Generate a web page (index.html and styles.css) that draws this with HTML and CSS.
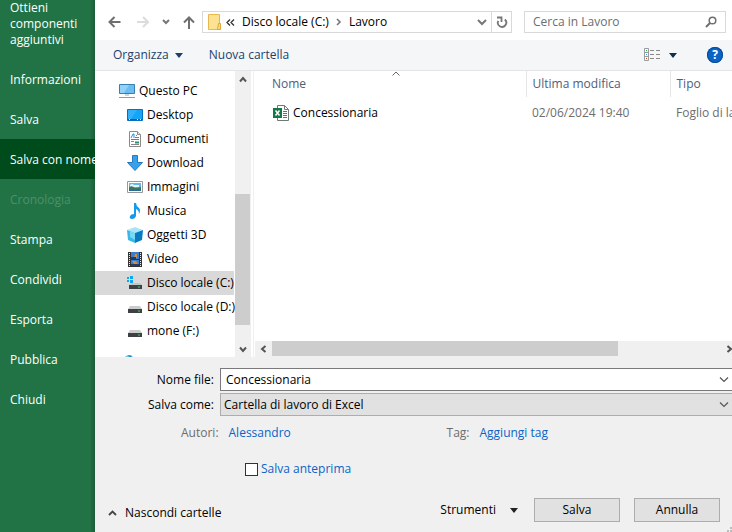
FILE: index.html
```html
<!DOCTYPE html>
<html lang="it">
<head>
<meta charset="utf-8">
<meta name="viewport" content="width=device-width, initial-scale=1">
<title>Salva con nome</title>
<link rel="stylesheet" href="styles.css">
</head>
<body>
<nav class="backstage">
  <a class="tab tall" href="#">Ottieni componenti aggiuntivi</a>
  <a class="tab" href="#">Informazioni</a>
  <a class="tab" href="#">Salva</a>
  <a class="tab active" href="#">Salva con nome</a>
  <a class="tab disabled" aria-disabled="true">Cronologia</a>
  <a class="tab" href="#">Stampa</a>
  <a class="tab" href="#">Condividi</a>
  <a class="tab" href="#">Esporta</a>
  <a class="tab" href="#">Pubblica</a>
  <a class="tab" href="#">Chiudi</a>
</nav>
<main class="dialog">
  <header class="address-row">
    <div class="history">
      <button class="plain" aria-label="Indietro"><svg width="14" height="12" viewBox="0 0 14 12" fill="none" stroke="#6f6f6f" stroke-width="2"><path d="M1.500 6H12.500M6.500 1L1.500 6l5 5"/></svg></button>
      <button class="plain" aria-label="Avanti"><svg width="14" height="12" viewBox="0 0 14 12" fill="none" stroke="#dcdcdc" stroke-width="2"><path d="M2 6h11M8 1l5 5-5 5"/></svg></button>
      <button class="plain" aria-label="Percorsi recenti"><svg width="8" height="6" viewBox="0 0 8 6" fill="none" stroke="#777" stroke-width="2"><path d="M1 1l3 3 3-3"/></svg></button>
      <button class="plain" aria-label="Su"><svg width="12" height="13" viewBox="0 0 12 13" fill="none" stroke="#6f6f6f" stroke-width="2"><path d="M6 13V1.500M1 6.500l5-5 5 5"/></svg></button>
    </div>
    <div class="address">
      <svg class="folder" width="16" height="18" viewBox="0 0 16 18"><path d="M1.500 1.500h11v15h-11z" fill="#fde391" stroke="#e8b74f"/><path d="M11.500 10.500h2v6h-3z" fill="#fbdc80" stroke="#dfa63c"/></svg>
      <svg width="9" height="7" viewBox="0 0 9 7" fill="none" stroke="#333" stroke-width="1.300"><path d="M4 .5l-3 3 3 3M8 .5l-3 3 3 3"/></svg>
      <a class="crumb" href="#">Disco locale (C:)</a>
      <svg width="6" height="8" viewBox="0 0 6 8" fill="none" stroke="#777" stroke-width="1.600"><path d="M1 1l3 3-3 3"/></svg>
      <a class="crumb" href="#">Lavoro</a>
      <button class="plain push" aria-label="Posizioni precedenti"><svg width="10" height="7" viewBox="0 0 10 7" fill="none" stroke="#777" stroke-width="2"><path d="M1 1l4 4 4-4"/></svg></button>
      <button class="plain refresh" aria-label="Aggiorna"><svg width="12" height="12" viewBox="0 0 12 12" fill="none" stroke="#777" stroke-width="1.800"><path d="M1 1.500h4.500V6"/><path d="M2.300 4.800a4.200 4.200 0 1 0 6.500-1.300"/></svg></button>
    </div>
    <div class="search">
      <input type="search" aria-label="Cerca" placeholder="Cerca in Lavoro">
      <svg width="12" height="12" viewBox="0 0 12 12" fill="none" stroke="#6f6f6f"><circle cx="7.500" cy="4.500" r="3.300" stroke-width="1.500"/><path d="M5 7L1 11" stroke-width="2"/></svg>
    </div>
  </header>
  <div class="toolbar">
    <button class="plain command">Organizza <svg width="8" height="5" viewBox="0 0 8 5"><path d="M0 0h8L4 5z" fill="#1c3f6e"/></svg></button>
    <button class="plain command">Nuova cartella</button>
    <button class="plain view" aria-label="Cambia visualizzazione"><svg width="17" height="14" viewBox="0 0 17 14"><path d="M.5.500h4v12h-4zM.5 4.500h4M.5 8.500h4" fill="#fff" stroke="#9b9b9b"/><path d="M6 2.500h4M12 2.500h4M6 6.500h4M12 6.500h4M6 10.500h4M12 10.500h4" stroke="#8a8a8a"/><path d="M2 2h1v1H2z" fill="#239b56"/><path d="M2 6h1v1H2z" fill="#1e9be8"/><path d="M2 10h1v1H2z" fill="#b3402a"/></svg><svg width="8" height="5" viewBox="0 0 8 5"><path d="M0 0h8L4 5z" fill="#122d50"/></svg></button>
    <button class="plain help" aria-label="Guida">?</button>
  </div>
  <div class="browser">
    <ul class="tree">
      <li class="root"><svg width="16" height="16" viewBox="0 0 16 16"><path d="M.5 1.500h15v9H.5z" fill="#69bdf3" stroke="#397fae"/><path d="M1 2h9l-5 8H1z" fill="#93d2f8"/><path d="M6 11h4v2H6z" fill="#ccd5da"/><path d="M0 14.500h16" stroke="#93999c"/></svg>Questo PC</li>
      <li><svg width="16" height="16" viewBox="0 0 16 16"><path d="M.5 2.500h15v11H.5z" fill="#12a5f8" stroke="#096ebf"/><path d="M1 3h9L4 12H1z" fill="#32b0fa"/><path d="M1 12.500h14" stroke="#075ca6"/><path d="M2 12.500h1M10 12.500h1M13 12.500h1" stroke="#fff"/></svg>Desktop</li>
      <li><svg width="16" height="16" viewBox="0 0 16 16"><path d="M2.500.500h8l3 3v12h-11z" fill="#fff" stroke="#8b8b8b"/><path d="M10.500.500v3h3" fill="#ddd" stroke="#8b8b8b"/><path d="M4 7l2-4h1v4M9 4.500h1M8 6.500h4M4 8.500h8" fill="none" stroke="#2a91d5"/><path d="M4 10.500h3M4 13.500h8" stroke="#888"/><path d="M8 10.500h4v2H8z" fill="#28906d"/></svg>Documenti</li>
      <li><svg width="16" height="16" viewBox="0 0 16 16"><path d="M5.500.500h5v7h5L8 15.500.500 7.500h5z" fill="#35a0ee" stroke="#2679bd"/></svg>Download</li>
      <li><svg width="16" height="16" viewBox="0 0 16 16"><path d="M.5 2.500h15v11H.5z" fill="#fff" stroke="#999"/><path d="M2 4h12v8H2z" fill="#64b7ec"/><path d="M3 6q2-2 4 0h5v2H3z" fill="#e5f4fb"/><path d="M2 8q3-2 6 1l6-1v2H2z" fill="#3d785b"/><path d="M2 10h12v2H2z" fill="#296d9b"/></svg>Immagini</li>
      <li><svg width="16" height="16" viewBox="0 0 16 16"><path d="M7 0h2q0 3 3 5 2 2 0 6 0-4-3-5v7q-1 3-4 3-3 0-2-3 1-2 4-2z" fill="#129bea"/></svg>Musica</li>
      <li><svg width="16" height="16" viewBox="0 0 16 16"><path d="M0 3l8-3 8 3-8 3z" fill="#a9e5fa"/><path d="M0 3l8 3v10l-7-3z" fill="#37b8e9"/><path d="M16 3L8 6v10l7-3z" fill="#087bc2"/><path d="M3 4l5 2v7l-5-3z" fill="#79d7f5"/></svg>Oggetti 3D</li>
      <li><svg width="16" height="16" viewBox="0 0 16 16"><path d="M1 1h14v15H1z" fill="#343434"/><path d="M4 1h8v7H4zM4 9h8v6H4z" fill="#397ed0"/><path d="M2.500 2v13M13.500 2v13" stroke="#eee" stroke-dasharray="1 1"/><path d="M8 3h2v4H7zM5 10h4l2 3H7z" fill="#d68b35"/><path d="M4 6h5v2H4zM4 13h8v2H4z" fill="#243c68"/></svg>Video</li>
      <li class="selected"><svg width="16" height="16" viewBox="0 0 16 16"><path d="M0 2h2v2H0zM3 1h3v3H3zM0 5h2v2H0zM3 5h3v3H3z" fill="#12a5ee"/><path d="M4 8h9l2 2H2z" fill="#c4c4c4"/><path d="M2 10h13v4H2z" fill="#3d4144"/><path d="M11 12h2" stroke="#34db63"/></svg>Disco locale (C:)</li>
      <li><svg width="16" height="16" viewBox="0 0 16 16"><path d="M3 7h10l2 3H1z" fill="#ccc"/><path d="M1 10h14v4H1z" fill="#3d4144"/><path d="M11 12h2" stroke="#34db63"/></svg>Disco locale (D:)</li>
      <li><svg width="16" height="16" viewBox="0 0 16 16"><path d="M3 7h10l2 3H1z" fill="#ccc"/><path d="M1 10h14v4H1z" fill="#3d4144"/><path d="M11 12h2" stroke="#34db63"/></svg>mone (F:)</li>
      <li class="root"><svg width="16" height="16" viewBox="0 0 16 16"><circle cx="10" cy="13" r="5" fill="#7cc5e8"/><path d="M9 8l4 1-2 3z" fill="#258bc5"/></svg></li>
    </ul>
    <div class="vbar">
      <button class="plain arrow" aria-label="Scorri in alto"><svg width="8" height="7" viewBox="0 0 8 7" fill="none" stroke="#555" stroke-width="2"><path d="M1 5.500l3-3.500 3 3.500"/></svg></button>
      <div class="vtrack"><div class="vthumb"></div></div>
      <button class="plain arrow" aria-label="Scorri in basso"><svg width="8" height="7" viewBox="0 0 8 7" fill="none" stroke="#555" stroke-width="2"><path d="M1 1.500L4 5l3-3.500"/></svg></button>
    </div>
    <section class="files">
      <svg class="sort" width="8" height="5" viewBox="0 0 8 5" fill="none" stroke="#666"><path d="M.5 4.500L4 1l3.500 3.500"/></svg>
      <table>
        <thead><tr><th class="name">Nome</th><th class="date">Ultima modifica</th><th class="type">Tipo</th></tr></thead>
        <tbody><tr><td class="name"><span class="file"><svg width="16" height="16" viewBox="0 0 16 16"><path d="M4.500.500h7l4 4v11h-11z" fill="#fff" stroke="#6f7a75"/><path d="M11.500.500v4h4" fill="none" stroke="#6f7a75"/><path d="M10 6.500h4M10 8.500h4M10 10.500h4M10 12.500h4" stroke="#368562"/><path d="M0 3h9v10H0z" fill="#17754a"/><path d="M2.500 5.500l4 5M6.500 5.500l-4 5" stroke="#fff" stroke-width="1.500"/></svg>Concessionaria</span></td><td class="date">02/06/2024 19:40</td><td class="type">Foglio di lavoro</td></tr></tbody>
      </table>
      <div class="hbar">
        <button class="plain arrow" aria-label="Scorri a sinistra"><svg width="7" height="8" viewBox="0 0 7 8" fill="none" stroke="#555" stroke-width="2"><path d="M5.500 1L2 4l3.500 3"/></svg></button>
        <div class="htrack"><div class="hthumb"></div></div>
        <button class="plain arrow end" aria-label="Scorri a destra"><svg width="5" height="8" viewBox="0 0 5 8" fill="none" stroke="#555" stroke-width="2"><path d="M.5 1L4 4 .5 7"/></svg></button>
      </div>
    </section>
  </div>
  <form class="details">
    <div class="field">
      <label for="filename">Nome file:</label>
      <div class="combo"><input id="filename" type="text" value="Concessionaria"><svg width="10" height="6" viewBox="0 0 10 6" fill="none" stroke="#555" stroke-width="1.200"><path d="M1 .5l4 4 4-4"/></svg></div>
    </div>
    <div class="field">
      <label for="filetype">Salva come:</label>
      <div class="combo"><select id="filetype"><option>Cartella di lavoro di Excel</option></select><svg width="10" height="6" viewBox="0 0 10 6" fill="none" stroke="#555" stroke-width="1.200"><path d="M1 .5l4 4 4-4"/></svg></div>
    </div>
    <div class="meta">
      <span class="key">Autori:</span><a class="authors" href="#">Alessandro</a>
      <span class="key">Tag:</span><a href="#">Aggiungi tag</a>
    </div>
    <label class="preview"><input type="checkbox">Salva anteprima</label>
    <div class="actions">
      <button type="button" class="plain hide"><svg width="9" height="6" viewBox="0 0 9 6" fill="none" stroke="#444" stroke-width="1.800"><path d="M1 5l3.500-3.500L8 5"/></svg>Nascondi cartelle</button>
      <button type="button" class="plain tools">Strumenti <svg width="8" height="5" viewBox="0 0 8 5"><path d="M0 0h8L4 5z" fill="#222"/></svg></button>
      <button type="button" class="push-button">Salva</button>
      <button type="button" class="push-button">Annulla</button>
    </div>
    <svg class="grip" width="5" height="5" viewBox="0 0 5 5"><path d="M3 0h2v2H3zM0 3h2v2H0zM3 3h2v2H3z" fill="#bbb"/></svg>
  </form>
</main>
</body>
</html>
```

FILE: styles.css
```css
* { box-sizing: border-box; }

body {
  margin: 0;
  display: flex;
  height: 100vh;
  overflow: hidden;
  font: 12px/16px "Open Sans", "Noto Sans", sans-serif;
  color: #000;
  background: #fff;
}

button, input, select { font: inherit; color: inherit; }
a { color: inherit; text-decoration: none; }
svg { display: block; flex: none; }

.plain {
  display: flex;
  align-items: center;
  padding: 0;
  border: 0;
  background: none;
}

/* Backstage menu */
.backstage {
  flex: none;
  width: 95px;
  overflow: hidden;
  background: linear-gradient(to left, #1b5c39, #217346 5px);
  color: #fff;
}
.tab {
  display: block;
  height: 40px;
  padding: 13px 0 11px 10px;
  white-space: nowrap;
}
.tab.tall {
  height: auto;
  padding-top: 0;
  white-space: normal;
}
.tab.active { background: #004b1c; }
.tab.disabled { color: #4d9068; }

/* Dialog */
.dialog {
  flex: 1;
  min-width: 0;
  display: flex;
  flex-direction: column;
}

.address-row {
  display: flex;
  align-items: center;
  gap: 12px;
  height: 40px;
  padding: 4px 6px 0 13px;
}
.history {
  display: flex;
  align-items: center;
  gap: 13px;
  margin-right: -5px;
}
.address {
  flex: 1;
  display: flex;
  align-items: center;
  gap: 7px;
  height: 22px;
  padding-left: 4px;
  border: 1px solid #d9d9d9;
}
.folder { margin-right: -4px; }
.push { margin-left: auto; }
.refresh {
  justify-content: center;
  width: 20px;
  height: 20px;
  margin-left: -3px;
  border-left: 1px solid #d9d9d9;
}
.search {
  display: flex;
  align-items: center;
  flex: none;
  width: 202px;
  height: 22px;
  padding: 0 8px;
  border: 1px solid #d9d9d9;
}
.search input {
  flex: 1;
  min-width: 0;
  padding: 0;
  border: 0;
  outline: 0;
}
.search input::placeholder { color: #6d6d6d; }

.toolbar {
  display: flex;
  align-items: center;
  gap: 26px;
  height: 31px;
  padding: 0 9px 0 18px;
  border-bottom: 1px solid #e5e5e5;
  background: #f5f6f8;
  color: #1c3f6e;
}
.command { gap: 6px; }
.view { gap: 8px; margin: 0 4px 0 auto; }
.help {
  justify-content: center;
  width: 16px;
  height: 16px;
  border-radius: 50%;
  background: #0a64c8;
  box-shadow: inset 0 0 0 1px #074a94;
  color: #fff;
  font-weight: 700;
}

.browser {
  flex: 1;
  min-height: 0;
  display: flex;
}
.tree {
  flex: none;
  width: 140px;
  margin: 0;
  padding: 8px 0 0;
  overflow: hidden;
  list-style: none;
}
.tree li {
  display: flex;
  align-items: center;
  gap: 4px;
  height: 24px;
  margin-right: 1px;
  padding-left: 32px;
  white-space: nowrap;
}
.tree .root { padding-left: 24px; }
.tree .selected { background: #d9d9d9; }

.arrow {
  flex: none;
  justify-content: center;
  width: 16px;
  height: 16px;
}
.vbar {
  flex: none;
  display: flex;
  flex-direction: column;
  width: 16px;
  background: #f0f0f0;
}
.vtrack {
  flex: 1;
  display: flex;
  flex-direction: column;
  justify-content: flex-end;
  padding: 0 1px 16px 0;
}
.vthumb { height: 55%; background: #cdcdcd; }

.files {
  position: relative;
  flex: 1;
  min-width: 0;
  display: flex;
  flex-direction: column;
  margin-left: 2px;
  padding-left: 1px;
  border-left: 1px solid #f0f0f0;
}
.sort { position: absolute; top: 0; left: 138px; }

table {
  width: 100%;
  table-layout: fixed;
  border-collapse: collapse;
}
th, td {
  padding: 0 0 0 6px;
  font-weight: 400;
  text-align: left;
  white-space: nowrap;
  overflow: hidden;
}
th {
  height: 26px;
  border-left: 1px solid #e5e5e5;
  color: #4c607a;
}
td { height: 32px; color: #6d6d6d; }
.date { width: 144px; }
.type { width: 62px; }
th.name { padding-left: 17px; border-left: 0; }
td.name { padding-left: 18px; color: #000; }
.file { display: flex; align-items: center; gap: 4px; }

.hbar {
  display: flex;
  height: 16px;
  margin-top: auto;
  background: #f0f0f0;
}
.htrack { flex: 1; padding: 0 0 1px 1px; }
.hthumb { width: 78%; height: 100%; background: #cdcdcd; }
.end { justify-content: flex-end; }

/* File details */
.details {
  position: relative;
  height: 175px;
  padding-top: 11px;
  background: #f0f0f0;
}
.field {
  display: flex;
  align-items: center;
  margin-bottom: 2px;
}
.field label {
  flex: none;
  width: 125px;
  padding-right: 6px;
  text-align: right;
}
.combo {
  flex: 1;
  display: grid;
  grid-template-columns: 1fr 13px;
  align-items: center;
}
.combo input, .combo select {
  grid-area: 1 / 1 / 2 / 3;
  appearance: none;
  width: 100%;
  height: 23px;
  padding: 0 14px 0 5px;
  border: 1px solid #7a7a7a;
  border-right: 0;
  border-radius: 0;
  background: #fff;
}
.combo select {
  padding-left: 3px;
  border-color: #adadad;
  background: #e1e1e1;
}
.combo svg { grid-area: 1 / 2; pointer-events: none; }

.meta {
  display: flex;
  padding: 7px 0 0 86px;
  color: #0a64c8;
}
.meta .key { margin-right: 10px; color: #6d6d6d; }
.authors { width: 218px; }

.preview {
  display: flex;
  align-items: center;
  gap: 3px;
  width: max-content;
  margin: 20px 0 0 150px;
  color: #0a64c8;
}
.preview input {
  appearance: none;
  width: 13px;
  height: 13px;
  margin: 0;
  border: 1px solid #333;
  background: #fff;
}

.actions {
  display: flex;
  align-items: center;
  gap: 14px;
  padding: 21px 12px 0 13px;
}
.hide { gap: 8px; margin-right: auto; padding-top: 6px; }
.tools { gap: 14px; margin-right: 2px; }
.push-button {
  width: 86px;
  height: 24px;
  padding: 0;
  border: 1px solid #adadad;
  background: #e1e1e1;
}
.grip { position: absolute; right: 0; bottom: 0; }
```
